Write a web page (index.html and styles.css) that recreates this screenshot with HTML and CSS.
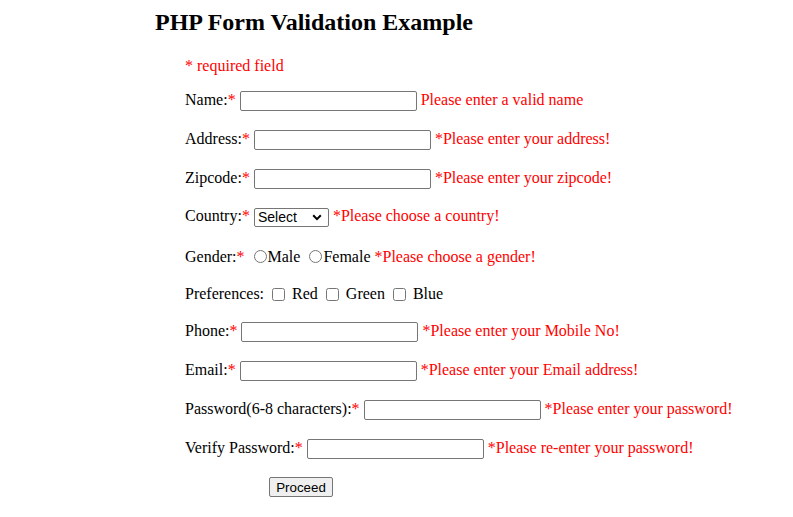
FILE: index.html
```html
<!DOCTYPE html>
<html lang="en">
<head>
<meta charset="utf-8">
<title>PHP Form Validation Example</title>
<link rel="stylesheet" href="styles.css">
</head>
<body>
<div class="page">
  <h2 class="title">PHP Form Validation Example</h2>
  <form class="form" onsubmit="return false;">
    <div class="row row-note"><span class="field error">* required field</span></div>
    <div class="row"><span class="field">Name:<span class="req">*</span> <input class="text" type="text" name="name"> <span class="error">Please enter a valid name</span></span></div>
    <div class="row"><span class="field">Address:<span class="req">*</span> <input class="text" type="text" name="address"> <span class="error">*Please enter your address!</span></span></div>
    <div class="row"><span class="field">Zipcode:<span class="req">*</span> <input class="text" type="text" name="zipcode"> <span class="error">*Please enter your zipcode!</span></span></div>
    <div class="row row-select"><span class="field">Country:<span class="req">*</span> <select class="select" name="country"><option>Select</option><option>India</option><option>USA</option></select> <span class="error">*Please choose a country!</span></span></div>
    <div class="row row-radio"><span class="field">Gender:<span class="req">*</span>  <input class="radio" type="radio" name="gender">Male <input class="radio" type="radio" name="gender">Female <span class="error">*Please choose a gender!</span></span></div>
    <div class="row row-check"><span class="field">Preferences: <input class="check" type="checkbox"> Red <input class="check" type="checkbox"> Green <input class="check" type="checkbox"> Blue</span></div>
    <div class="row"><span class="field">Phone:<span class="req">*</span> <input class="text" type="text" name="phone"> <span class="error">*Please enter your Mobile No!</span></span></div>
    <div class="row"><span class="field">Email:<span class="req">*</span> <input class="text" type="text" name="email"> <span class="error">*Please enter your Email address!</span></span></div>
    <div class="row"><span class="field">Password(6-8 characters):<span class="req">*</span> <input class="text" type="password" name="password"> <span class="error">*Please enter your password!</span></span></div>
    <div class="row"><span class="field">Verify Password:<span class="req">*</span> <input class="text" type="password" name="verify"> <span class="error">*Please re-enter your password!</span></span></div>
    <div class="row row-submit"><button class="button" type="submit">Proceed</button></div>
  </form>
</div>
</body>
</html>
```
FILE: styles.css
```css
html, body {
  margin: 0;
  padding: 0;
  background: #ffffff;
}

body {
  font-family: "Liberation Serif", "Times New Roman", serif;
  font-size: 16px;
  color: #000000;
}

.page {
  padding: 8px 0 0 155px;
}

.title {
  margin: 0;
  font-size: 24px;
  line-height: 28px;
  font-weight: bold;
}

.form {
  display: flex;
  flex-direction: column;
  gap: 17px;
  padding-left: 30px;
  margin-top: 23px;
}

.row {
  display: flex;
  align-items: center;
  height: 22px;
  white-space: nowrap;
}

.row-note { height: 14px; }
.row-select { height: 20px; }
.row-radio { margin-top: 1px; }
.row-check { height: 18px; margin-top: 1px; margin-bottom: 1px; }
.row-submit { height: 20px; }

.field {
  display: block;
  line-height: 18px;
}

.req,
.error {
  color: #ff0000;
}

.text {
  box-sizing: border-box;
  width: 177px;
  height: 20px;
  margin: 0;
  padding: 1px 2px;
  border: 1px solid #767676;
  border-radius: 2px;
  font-family: "Liberation Sans", Arial, sans-serif;
  font-size: 13.33px;
  vertical-align: middle;
  background: #ffffff;
}

.select {
  box-sizing: border-box;
  width: 75px;
  height: 19px;
  margin: 0;
  padding: 0 0 0 3px;
  border: 1px solid #767676;
  border-radius: 2px;
  font-family: "Liberation Sans", Arial, sans-serif;
  font-size: 14px;
  line-height: 17px;
  color: #000000;
  -webkit-appearance: none;
  appearance: none;
  background-color: #ffffff;
  background-image: url("data:image/svg+xml;utf8,<svg xmlns='http://www.w3.org/2000/svg' width='10' height='7' viewBox='0 0 10 7'><path d='M1.2 1.3L5 5.1L8.8 1.3' fill='none' stroke='black' stroke-width='2'/></svg>");
  background-repeat: no-repeat;
  background-position: right 6px center;
  background-size: 10px 7px;
  vertical-align: middle;
}

.radio {
  width: 13px;
  height: 13px;
  margin: 3px 1px 0 5px;
  vertical-align: -1px;
}

.check {
  width: 13px;
  height: 13px;
  margin: 3px 3px 3px 4px;
  vertical-align: -2px;
}

.button {
  box-sizing: border-box;
  margin-left: 84px;
  width: 64px;
  height: 20px;
  padding: 1px 6px;
  border: 1px solid #767676;
  border-radius: 2px;
  background: #efefef;
  font-family: "Liberation Sans", Arial, sans-serif;
  font-size: 13.33px;
  color: #000000;
}
```
